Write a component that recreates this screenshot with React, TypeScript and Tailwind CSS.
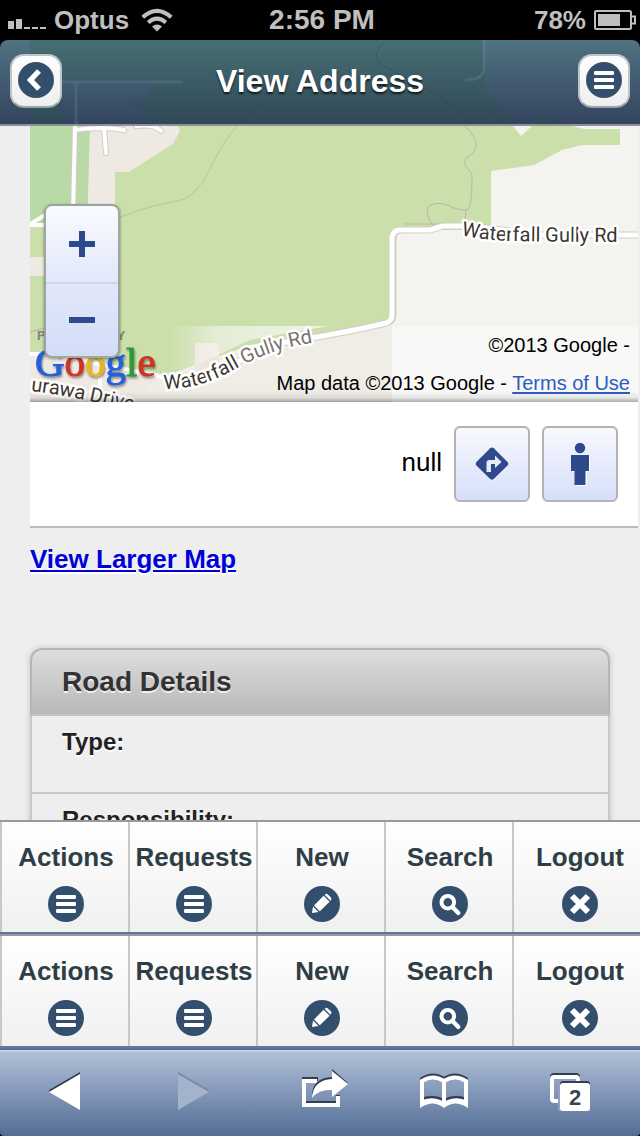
import type { ReactNode } from 'react';

function Disc({ children }: { children: ReactNode }) {
  return (
    <svg viewBox="0 0 36 36" className="h-9 w-9" aria-hidden="true">
      <circle cx="18" cy="18" r="18" fill="#344f6d" />
      {children}
    </svg>
  );
}

const BarsIcon = () => (
  <Disc>
    <rect x="8" y="9" width="20" height="4" rx="1.2" fill="#fff" />
    <rect x="8" y="16" width="20" height="4" rx="1.2" fill="#fff" />
    <rect x="8" y="23" width="20" height="4" rx="1.2" fill="#fff" />
  </Disc>
);
const BackIcon = () => (
  <Disc>
    <path d="M21 9L12.5 18L21 27" fill="none" stroke="#fff" strokeWidth="5.4" strokeLinejoin="miter" />
  </Disc>
);
const PencilIcon = () => (
  <Disc>
    <path d="M19.6 9.8L25.6 15.8L15.8 25.2L10 19.4Z" fill="#fff" />
    <path d="M20.6 8.8L21.8 7.9Q22.6 7.4 23.6 8.2L27 11.6Q27.8 12.6 27.2 13.6L26.4 14.8Z" fill="#fff" />
    <path d="M9 20.6L14.6 26L8 27Z" fill="#fff" />
  </Disc>
);
const SearchIcon = () => (
  <Disc>
    <circle cx="15.8" cy="16.2" r="6.3" fill="none" stroke="#fff" strokeWidth="4" />
    <path d="M20.5 21L26.3 27" stroke="#fff" strokeWidth="4.2" strokeLinecap="round" />
  </Disc>
);
const CrossIcon = () => (
  <Disc>
    <path d="M10 10L26 26M26 10L10 26" stroke="#fff" strokeWidth="6" />
  </Disc>
);

function StatusBar() {
  return (
    <div className="grid h-10 shrink-0 grid-cols-3 items-center bg-black pr-1 pl-2 font-bold text-[#bfbfbf]">
      <div className="flex items-center gap-2 text-[26px] leading-10">
        <svg viewBox="0 0 38 20" className="h-5 w-[38px]" fill="#bfbfbf" aria-hidden="true">
          <rect x="0" y="11" width="6" height="8" />
          <rect x="8" y="9" width="6" height="10" />
          <rect x="16" y="17" width="6" height="2" />
          <rect x="24" y="17" width="6" height="2" />
          <rect x="32" y="17" width="6" height="2" />
        </svg>
        <span>Optus</span>
        <svg viewBox="0 0 32 24" className="ml-1 h-6 w-8" fill="none" stroke="#bfbfbf" strokeWidth="4" aria-hidden="true">
          <path d="M1.8 9.2Q16 -3.6 30.2 9.2" />
          <path d="M7.2 14.6Q16 6.8 24.8 14.6" />
          <path d="M16 23.6L11 18.6Q16 14.4 21 18.6Z" fill="#bfbfbf" stroke="none" />
        </svg>
      </div>
      <div className="text-center text-[28px] leading-10">2:56 PM</div>
      <div className="flex items-center justify-end gap-2 text-[26px] leading-10">
        <span>78%</span>
        <svg viewBox="0 0 42 20" className="h-5 w-[42px]" aria-hidden="true">
          <rect x="1" y="1" width="36" height="18" rx="1.5" fill="none" stroke="#bfbfbf" strokeWidth="2" />
          <rect x="4" y="4" width="22" height="12" fill="#bfbfbf" />
          <path d="M38 6.5H41V13.5H38" fill="none" stroke="#bfbfbf" strokeWidth="2" />
        </svg>
      </div>
    </div>
  );
}

const headButton =
  'relative flex h-[54px] w-[52px] items-center justify-center rounded-[14px] border-2 border-[#bfc4c8] border-b-[#9aa1a8] bg-linear-to-b from-white to-[#eeeeee] pb-[2px]';

function Header() {
  return (
    <header className="relative flex h-[86px] shrink-0 items-center justify-between overflow-hidden rounded-t-lg border-b-2 border-[#8b919b] bg-linear-to-b from-[#507381] to-[#34445f] px-[10px] pb-[2px]">
      <svg
        viewBox="0 40 640 84"
        preserveAspectRatio="xMinYMin slice"
        className="absolute inset-0 h-full w-full"
        aria-hidden="true"
      >
        <path d="M30 40H482L486 95L500 126H158L128 103H150V82H62V126H30Z" fill="#206030" fillOpacity=".18" />
        <path d="M486 92L518 126H500Z" fill="#206030" fillOpacity=".18" />
        <path d="M520 126L543 116L570 126Z" fill="#206030" fillOpacity=".18" />
        <path d="M62 82H183M76 82V126M484 40V68Q484 80 465 80" fill="none" stroke="#7a9db5" strokeOpacity=".22" strokeWidth="3" />
        <path d="M385 41Q370 55 380 64Q420 85 440 97Q462 112 468 126M236 126Q246 114 262 106" fill="none" stroke="#233648" strokeOpacity=".25" />
      </svg>
      <button type="button" aria-label="Back" className={headButton}>
        <BackIcon />
      </button>
      <h1 className="relative text-[32px] leading-10 font-bold text-white [text-shadow:0_2px_2px_rgba(0,0,0,0.7)]">
        View Address
      </h1>
      <button type="button" aria-label="Menu" className={headButton}>
        <BarsIcon />
      </button>
    </header>
  );
}

function MapDrawing() {
  return (
    <svg
      viewBox="30 126 608 276"
      preserveAspectRatio="xMinYMin slice"
      className="h-full w-full"
      fontFamily="Roboto, 'Liberation Sans', sans-serif"
    >
      <defs>
        <path id="road-east" d="M461 235Q485 240 508 241Q560 242 640 242" />
        <path id="road-south" d="M164 389C195 388 208 383 230 372C258 356 280 347 330 340" />
        <path id="drive" d="M31 391Q75 396 150 415" />
        <linearGradient id="wash" x1="0" x2="1">
          <stop offset="0" stopColor="#f7f6f3" stopOpacity="0" />
          <stop offset=".3" stopColor="#f7f6f3" stopOpacity=".6" />
          <stop offset="1" stopColor="#fafafa" stopOpacity=".75" />
        </linearGradient>
        <linearGradient id="edge" x1="0" x2="0" y1="0" y2="1">
          <stop offset="0" stopColor="#000" stopOpacity="0" />
          <stop offset=".6" stopColor="#000" stopOpacity=".07" />
          <stop offset="1" stopColor="#000" stopOpacity=".32" />
        </linearGradient>
      </defs>
      <rect x="30" y="126" width="608" height="276" fill="#f4f3f0" />
      <path d="M30 126H513L521 136L532 126H572L584 129H620V145H582L562 150L534 165L491 171V230H392V322L250 345L155 380L30 354Z" fill="#cadfaa" />
      <path d="M30 126H90L88 206L60 220L30 225Z" fill="#b9d9a6" />
      <path d="M90 126H178L180 131L173 144L129 172L120 172H115V230H87Z" fill="#eeeae3" />
      <path d="M30 257H75V276H30Z" fill="#eeeae3" />
      <path d="M30 354L85 358L120 372L165 377V402H30Z" fill="#eeeae3" />
      <path d="M155 380L250 347L392 324V402H130Z" fill="#f0ede7" />
      <rect x="195" y="343" width="24" height="34" fill="#ece7dd" />
      <g fill="none" strokeLinejoin="round" strokeLinecap="round">
        <path d="M237 126C220 145 213 165 202 183Q190 199 178 201C155 205 140 209 116 219" stroke="#b9b8a2" strokeOpacity=".8" />
        <path d="M465 126Q477 138 476 145Q476 153 467 157Q462 163 468 169Q473 173 472 178Q472 210 466 210Q460 211 447 205Q435 201 428 207Q425 216 433 225M405 224H460M466 210L465 220" stroke="#b9b8a2" />
        <path d="M75 126L73 215M75 130Q105 126 124 130M136 126Q155 124 161 131M104 128L106 153" stroke="#d3cdc3" strokeWidth="6" />
        <path d="M75 126L73 215M75 130Q105 126 124 130M136 126Q155 124 161 131M104 128L106 153" stroke="#fff" strokeWidth="4" />
        <path d="M30 225H50M32 223L60 206M30 354H48L155 375L180 382M100 376V402M108 366L84 358M78 398V402" stroke="#fff" strokeWidth="4" />
        <path d="M30 332L48 327" stroke="#b5b59d" />
        <path d="M170 386Q225 370 275 344Q350 332 386 323Q393 321 393 315V240Q393 231 400 230H430L443 226H470L540 235H640" stroke="#d2ccc4" strokeWidth="7" />
        <path d="M170 386Q225 370 275 344Q350 332 386 323Q392 321 392 315V240Q392 230 400 230H430L443 226H470L540 235H640" stroke="#fff" strokeWidth="5" />
      </g>
      <g fontSize="20" fill="#3b3632" stroke="#fff" strokeWidth="5" strokeLinejoin="round" paintOrder="stroke">
        <text>
          <textPath href="#road-east">Waterfall Gully Rd</textPath>
        </text>
        <text>
          <textPath href="#road-south">
            Waterfall <tspan fill="#77736f">Gully Rd</tspan>
          </textPath>
        </text>
        <text>
          <textPath href="#drive">urawa Drive</textPath>
        </text>
      </g>
      <g fontSize="13" fontWeight="bold" fill="#85857a">
        <text x="37" y="340">P</text>
        <text x="117" y="340">Y</text>
      </g>
      <path d="M170 326H328L250 340L195 366L170 375Z" fill="url(#wash)" />
      <path d="M392 326H638V402H392Z" fill="#fafafa" fillOpacity=".75" />
      <text
        x="35"
        y="376"
        fontFamily="'Liberation Serif', serif"
        fontSize="41"
        className="[filter:drop-shadow(1px_2px_1px_rgba(0,0,0,0.4))]"
      >
        <tspan fill="#2460dc" stroke="#2460dc">G</tspan>
        <tspan fill="#cf3526" stroke="#cf3526">o</tspan>
        <tspan fill="#eab620" stroke="#eab620">o</tspan>
        <tspan fill="#2460dc" stroke="#2460dc">g</tspan>
        <tspan fill="#2f9a35" stroke="#2f9a35">l</tspan>
        <tspan fill="#cf3526" stroke="#cf3526">e</tspan>
      </text>
      <rect x="30" y="391" width="608" height="11" fill="url(#edge)" />
    </svg>
  );
}

const panelButton =
  'flex h-[76px] w-[76px] items-center justify-center rounded-md border-2 border-[#b3b3b3] bg-linear-to-b from-[#f8f9fe] to-[#d6dffa]';

function MapSection() {
  return (
    <section className="pr-[2px] pl-[30px]">
      <div className="relative h-[276px] overflow-hidden">
        <MapDrawing />
        <div className="absolute top-[78px] left-[14px] flex h-[154px] w-[76px] flex-col rounded-lg border-2 border-[#8c9384]/80 bg-linear-to-b from-[#fafbff] via-[#e2e8fa] to-[#d3ddf8] shadow-[0_1px_3px_rgba(0,0,0,0.4)]">
          <button type="button" aria-label="Zoom in" className="flex h-[78px] items-center justify-center border-b-2 border-[#ccd6ef]">
            <svg viewBox="0 0 26 26" className="h-[26px] w-[26px]" aria-hidden="true">
              <path d="M10 0H16V10H26V16H16V26H10V16H0V10H10Z" fill="#2f4a8c" />
            </svg>
          </button>
          <button type="button" aria-label="Zoom out" className="flex flex-1 items-center justify-center">
            <svg viewBox="0 0 26 26" className="h-[26px] w-[26px]" aria-hidden="true">
              <path d="M0 10H26V16H0Z" fill="#2f4a8c" />
            </svg>
          </button>
        </div>
        <div className="absolute right-2 bottom-0 text-right text-[20px] leading-[38px] text-black">
          <p>©2013 Google -</p>
          <p>
            Map data ©2013 Google -{' '}
            <a href="#terms" className="text-[#2b5cc4] underline decoration-2 underline-offset-2">
              Terms of Use
            </a>
          </p>
        </div>
      </div>
      <div className="flex items-center justify-end gap-3 border-b-2 border-[#bdbdbd] bg-white py-6 pr-5 text-[26px] text-black">
        <span className="pb-1">null</span>
        <button type="button" aria-label="Directions" className={panelButton}>
          <svg viewBox="0 0 34 34" className="h-[34px] w-[34px]" aria-hidden="true">
            <path d="M17 3L33 19L18 34Z" fill="#fff" />
            <path d="M15.2 1.2Q17 -.4 18.8 1.2L32.6 15Q34 17 32.6 18.6L18.8 32Q17 33.6 15.2 32L1.4 18.6Q0 17 1.4 15Z" fill="#2f4a8c" />
            <path d="M11.5 25V16Q11.5 13 14.5 13H20V8.5L26.5 15L20 21V17H16V25Z" fill="#e6ebfb" />
          </svg>
        </button>
        <button type="button" aria-label="Street view" className={panelButton}>
          <svg viewBox="0 0 20 44" className="h-11 w-5" aria-hidden="true">
            <circle cx="10" cy="6" r="5.2" fill="#2f4a8c" />
            <path d="M2 14H20V30H17V44H6V30H2Z" fill="#fff" />
            <path d="M1 13H19V29H15.5V43H4.5V29H1Z" fill="#2f4a8c" />
          </svg>
        </button>
      </div>
    </section>
  );
}

const tools = [
  { label: 'Actions', Icon: BarsIcon },
  { label: 'Requests', Icon: BarsIcon },
  { label: 'New', Icon: PencilIcon },
  { label: 'Search', Icon: SearchIcon },
  { label: 'Logout', Icon: CrossIcon },
];

function Toolbar() {
  return (
    <nav className="grid shrink-0 grid-cols-5 border-t-2 border-b-2 border-t-[#999] border-b-[#5f77a0]">
      {tools.map(({ label, Icon }) => (
        <button
          key={label}
          type="button"
          className="flex h-[110px] flex-col items-center gap-[13px] border-l-2 border-[#c8c8c8] bg-linear-to-b from-white to-[#f0f0f0] pt-[19px] pl-[2px] text-[26px] leading-8 font-bold text-[#2f3e46] last:pl-[6px]"
        >
          {label}
          <Icon />
        </button>
      ))}
    </nav>
  );
}

function BrowserBar() {
  return (
    <nav className="grid h-[88px] shrink-0 grid-cols-5 items-center justify-items-center rounded-b border-t-2 border-[#5b6f95] bg-linear-to-b from-[#b4c2d9] to-[#536d96] pb-1 shadow-[inset_0_2px_0_#c4cfe1]">
      <button type="button" aria-label="Previous page">
        <svg viewBox="32 1070 64 44" className="h-11 w-16" aria-hidden="true">
          <path d="M80 1073L49 1091V1093H80Z" fill="#333f52" />
          <path d="M80 1075V1111L49 1093Z" fill="#fff" />
        </svg>
      </button>
      <button type="button" aria-label="Next page" disabled>
        <svg viewBox="160 1070 64 44" className="h-11 w-16" aria-hidden="true">
          <path d="M178 1073L209 1091V1093H178Z" fill="#7688a5" />
          <path d="M178 1075V1111L209 1093Z" fill="#a3b3cb" />
        </svg>
      </button>
      <button type="button" aria-label="Share">
        <svg viewBox="288 1070 64 44" className="h-11 w-16" aria-hidden="true">
          <path d="M318 1080H304V1104H338V1096" fill="none" stroke="#333f52" strokeWidth="4" />
          <path d="M317 1082H304V1106H338V1097" fill="none" stroke="#fff" strokeWidth="4" />
          <path d="M332 1070L348 1084L332 1096V1089Q319 1088 312 1097Q312 1079 332 1078Z" fill="#333f52" />
          <path d="M332 1072L348 1085L332 1098V1091Q319 1090 312 1099Q313 1081 332 1080Z" fill="#fff" />
        </svg>
      </button>
      <button type="button" aria-label="Bookmarks">
        <svg viewBox="416 1070 64 44" className="h-11 w-16" fill="none" aria-hidden="true">
          <path d="M422 1101V1080Q433 1073 444 1080Q455 1073 466 1080V1101M422 1101Q433 1096 444 1102Q455 1096 466 1101" stroke="#333f52" strokeWidth="4" />
          <path d="M422 1106V1082Q433 1075 444 1082Q455 1075 466 1082V1106M444 1082V1104" stroke="#fff" strokeWidth="4" />
          <path d="M420 1102Q433 1096 444 1103Q455 1096 468 1102V1109Q455 1100 444 1109Q433 1100 420 1109Z" fill="#fff" />
        </svg>
      </button>
      <button type="button" aria-label="Pages, 2 open">
        <svg viewBox="544 1070 64 44" className="h-11 w-16" aria-hidden="true">
          <rect x="552" y="1076" width="26" height="26" rx="2" fill="none" stroke="#333f52" strokeWidth="4" />
          <rect x="552" y="1078" width="26" height="24" rx="2" fill="none" stroke="#fff" strokeWidth="4" />
          <rect x="558" y="1084" width="32" height="28" fill="#8fa1be" />
          <rect x="560" y="1082" width="30" height="20" rx="3" fill="#333f52" />
          <rect x="560" y="1084" width="30" height="28" rx="3" fill="#fff" />
          <text x="575" y="1106" textAnchor="middle" fontSize="22" fontWeight="bold" fill="#3b4655">
            2
          </text>
        </svg>
      </button>
    </nav>
  );
}

export default function App() {
  return (
    <div className="flex h-screen flex-col bg-black font-['Liberation_Sans',Arial,sans-serif]">
      <StatusBar />
      <Header />
      <main className="min-h-0 flex-1 overflow-y-auto bg-[#eeeeee] [scrollbar-width:none]">
        <MapSection />
        <div className="px-[30px] pt-[11px] [text-shadow:0_2px_0_#fff]">
          <a href="#map" className="text-[26px] leading-10 font-bold text-[#0000d8] underline decoration-2 underline-offset-2">
            View Larger Map
          </a>
          <section className="mt-[69px] rounded-t-xl shadow-[0_0_6px_rgba(0,0,0,0.18)]">
            <h2 className="rounded-t-xl border-2 border-[#b5b5b5] border-b-[#c4c4c4] bg-linear-to-b from-[#dddddd] to-[#b9b9b9] px-[30px] py-3 text-[28px] leading-10 font-bold text-[#333] [text-shadow:0_2px_0_#eee]">
              Road Details
            </h2>
            <dl className="border-x-2 border-[#c8c8c8] text-[24px] leading-8 font-bold text-[#222]">
              <dt className="h-[78px] border-b-2 border-[#c8c8c8] px-[30px] pt-[10px]">Type:</dt>
              <dt className="h-[78px] border-b-2 border-[#c8c8c8] px-[30px] pt-[10px]">Responsibility:</dt>
            </dl>
          </section>
        </div>
      </main>
      <Toolbar />
      <Toolbar />
      <BrowserBar />
    </div>
  );
}
